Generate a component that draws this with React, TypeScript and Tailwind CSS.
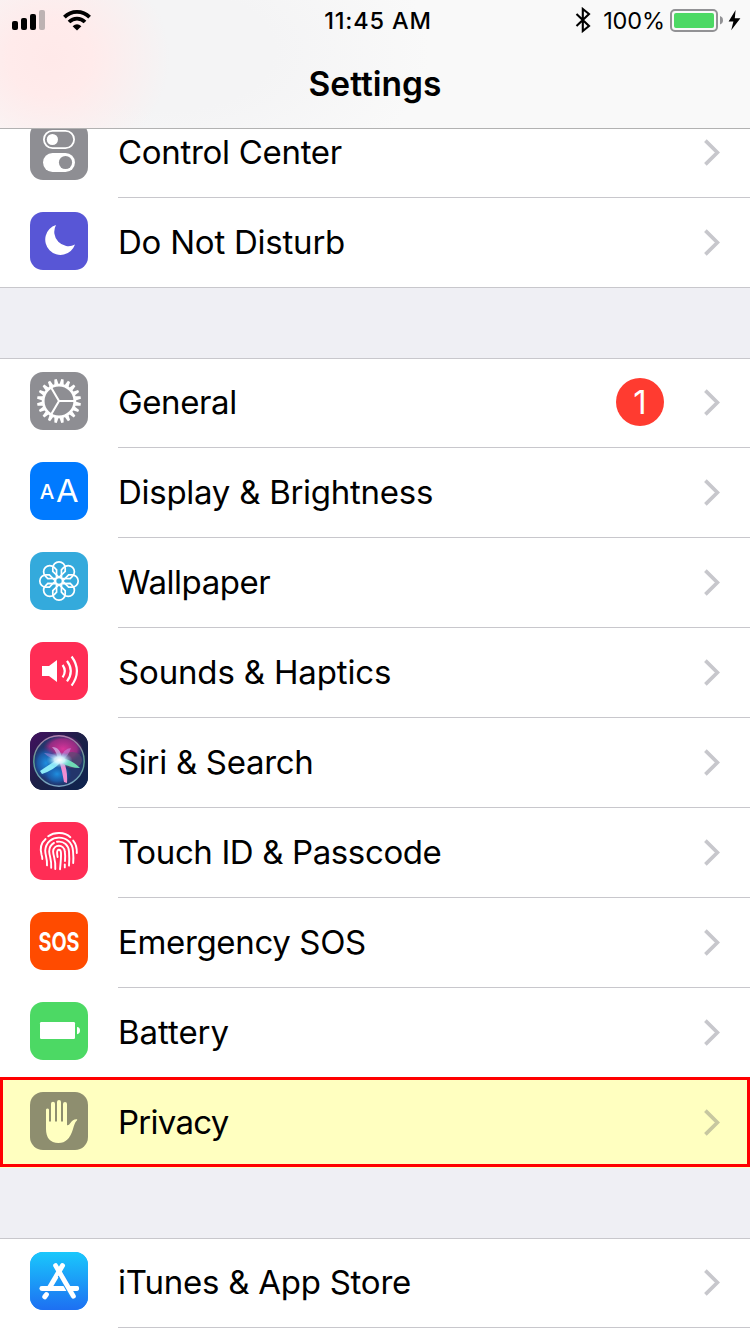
import React from 'react';

const GearIcon = () => {
  const teeth = Array.from({ length: 20 }, (_, i) => i * 18);
  return (
    <g transform="translate(29 29)">
      {teeth.map(angle => (
        <path key={angle} d="M-2.1 -16.5L-1.2 -22H1.2L2.1 -16.5Z" fill="#fff" transform={`rotate(${angle + 9})`} />
      ))}
      <circle r="15.8" fill="none" stroke="#fff" strokeWidth="2.7" />
      <path d="M0 0H15M0 0L-7.6 -13M0 0L-7.6 13" stroke="#fff" strokeWidth="2.1" fill="none" />
    </g>
  );
};

const FlowerIcon = () => (
  <g transform="translate(29 29)" fill="none" stroke="#fff" strokeWidth="1.7">
    {[0, 45, 90, 135, 180, 225, 270, 315].map(angle => (
      <path key={angle} d="M0 -3.6L-6.2 -9.6V-13A6.2 6.2 0 0 1 6.2 -13V-9.6Z" transform={`rotate(${angle})`} />
    ))}
    <circle r="3.6" />
  </g>
);

const SiriIcon = () => (
  <>
    <defs>
      <linearGradient id="siriBg" x1="0" y1="0" x2="1" y2="1">
        <stop offset="0" stopColor="#43105f" />
        <stop offset="0.5" stopColor="#1c2047" />
        <stop offset="1" stopColor="#0d2450" />
      </linearGradient>
      <radialGradient id="siriPink" cx="0.5" cy="0.5" r="0.5">
        <stop offset="0" stopColor="#d8359a" />
        <stop offset="0.7" stopColor="#b02a88" stopOpacity="0.8" />
        <stop offset="1" stopColor="#8a2080" stopOpacity="0" />
      </radialGradient>
      <radialGradient id="siriBlue" cx="0.5" cy="0.5" r="0.5">
        <stop offset="0" stopColor="#1f8fe0" />
        <stop offset="0.6" stopColor="#1a63b5" stopOpacity="0.8" />
        <stop offset="1" stopColor="#183a80" stopOpacity="0" />
      </radialGradient>
      <radialGradient id="siriGlow" cx="0.5" cy="0.5" r="0.5">
        <stop offset="0" stopColor="#fff" />
        <stop offset="0.4" stopColor="#d5f7ff" stopOpacity="0.9" />
        <stop offset="1" stopColor="#5ec8f0" stopOpacity="0" />
      </radialGradient>
      <linearGradient id="siriRing" x1="0" y1="0" x2="0" y2="1">
        <stop offset="0" stopColor="#b07fae" />
        <stop offset="0.5" stopColor="#5aa08f" />
        <stop offset="1" stopColor="#7ba3c4" />
      </linearGradient>
    </defs>
    <rect width="58" height="58" rx="13" fill="url(#siriBg)" />
    <circle cx="29" cy="29" r="25" fill="#23356b" />
    <ellipse cx="33" cy="17" rx="20" ry="14" fill="url(#siriPink)" />
    <ellipse cx="16" cy="31" rx="14" ry="17" fill="url(#siriBlue)" />
    <ellipse cx="27" cy="42" rx="15" ry="12" fill="url(#siriBlue)" />
    <ellipse cx="42" cy="28" rx="10" ry="8" fill="#5b4a72" opacity="0.7" />
    <path d="M30 26Q20 32 10 39L12 42Q24 38 31 30Z" fill="#8decf8" />
    <path d="M29 28Q32 38 34 50L37 51Q38 38 33 28Z" fill="#f08fd2" />
    <path d="M31 26Q41 27 50 36Q40 36 30 30Z" fill="#6fdcb4" />
    <path d="M28 28Q27 20 22 15Q31 15 32 28Z" fill="#d0b4ea" opacity="0.75" />
    <path d="M30 27Q34 16 41 16Q39 23 32 29Z" fill="#c786dd" opacity="0.6" />
    <path d="M29 28Q20 27 14 21Q24 21 31 27Z" fill="#a087d8" opacity="0.6" />
    <ellipse cx="29.5" cy="28" rx="13" ry="8" fill="url(#siriGlow)" />
    <circle cx="29" cy="29" r="25.2" fill="none" stroke="url(#siriRing)" strokeWidth="1.4" />
  </>
);

const icons: { [key: string]: React.ReactNode } = {
  control: (
    <>
      <rect x="13.9" y="8.9" width="30.2" height="17.2" rx="8.6" fill="none" stroke="#fff" strokeWidth="1.8" />
      <circle cx="22.4" cy="17.5" r="5.6" fill="#fff" />
      <rect x="13" y="31" width="32" height="19" rx="9.5" fill="#fff" />
      <circle cx="35.5" cy="40.5" r="6.6" fill="#8e8e93" />
    </>
  ),
  moon: <path d="M26 13A15.3 15.3 0 1 0 45 32.6A14.3 14.3 0 0 1 26 13Z" fill="#fff" />,
  gear: <GearIcon />,
  display: (
    <g fill="#fff" fontFamily="Inter, sans-serif">
      <text x="9.8" y="37" fontSize="20.6" fontWeight="500" textLength="14.6" lengthAdjust="spacingAndGlyphs">A</text>
      <text x="26" y="40" fontSize="31.6" fontWeight="400" textLength="22.6" lengthAdjust="spacingAndGlyphs">A</text>
    </g>
  ),
  flower: <FlowerIcon />,
  sound: (
    <>
      <path d="M12 24H19L27 18V40L19 34H12Z" fill="#fff" />
      <g fill="none" stroke="#fff" strokeWidth="2.2">
        <path d="M32.6 23Q37 29 32.6 35.4" />
        <path d="M37 18.8Q44.6 29 37 39.4" />
        <path d="M41.6 14.5Q52.2 29 41.6 43.6" />
      </g>
    </>
  ),
  siri: <SiriIcon />,
  touch: (
    <g fill="none" stroke="#fff" strokeWidth="1.9" strokeLinecap="round">
      <path d="M18.2 14.2C24.5 9.8 34.5 9.8 40.4 15.2" />
      <path d="M15.6 17C11 21 9.8 27 11.6 33Q12.3 35 12.3 37" />
      <path d="M43.2 18.6C46 22 47 26 46.8 31" />
      <path d="M17 43.4C17.6 37 15.2 34 15.2 28.5C16.5 11 42 11.5 43 29C43.4 33 43.6 37 43.2 41" />
      <path d="M21.2 45.8C21.8 38 19.4 34 19.2 29.5C19.2 25.5 21 22.6 24 20.9" />
      <path d="M27 19.8C34 18.5 38.8 23.5 39 29.5C39.4 35 39.4 39 39 43.6" />
      <path d="M25.3 47C26 38 23.2 34 23.1 29.5C23.6 21.8 34 22 34.8 29.5C35.3 33 35.3 36 35 39" />
      <path d="M34.8 42.5V45.4" />
      <path d="M30 47.2C30.6 41 31.2 36 31 31C30.7 26.6 27 27 27.1 30.6Q27.2 33 27.6 35" />
    </g>
  ),
  sos: (
    <text fill="#fff" fontFamily="Inter, sans-serif" fontSize="26" fontWeight="700" textAnchor="middle" transform="translate(29 38.5) scale(0.76 1)">
      SOS
    </text>
  ),
  battery: (
    <>
      <rect x="10" y="20" width="35" height="17" rx="1.2" fill="#fff" />
      <path d="M47 25Q50 25.2 50 28.6T47 32.2Z" fill="#fff" />
    </>
  ),
  hand: (
    <path
      d="M16 17.5A1.6 1.6 0 0 1 19 17.5V29.5H21V11.7A2 2 0 0 1 25 11.7V29.5H27V10A2 2 0 0 1 31 10V29.5H33V12A2 2 0 0 1 37 12V33Q38.6 33.8 40.2 31.2Q43.2 26.6 47.2 27.2Q47.6 27.8 46 29.6Q44.6 31.2 43 37Q39 51 28.5 51C20 51 16 45.5 16 37Z"
      fill="#ffffc0"
    />
  ),
  store: (
    <>
      <defs>
        <linearGradient id="storeBg" x1="0" y1="0" x2="0" y2="1">
          <stop offset="0" stopColor="#1ac8fc" />
          <stop offset="1" stopColor="#1d6ff2" />
        </linearGradient>
      </defs>
      <rect width="58" height="58" rx="13" fill="url(#storeBg)" />
      <g fill="none" strokeLinecap="round">
        <path d="M11.8 36.5H46.6" stroke="#fff" strokeWidth="4.8" />
        <path d="M32.5 13.6L19.6 35.5" stroke="#fff" strokeWidth="5" />
        <path d="M30.6 22.5L43.2 44.2" stroke="#1f95f7" strokeWidth="6.6" strokeLinecap="butt" />
        <path d="M25.6 13.6L43.4 44.2" stroke="#fff" strokeWidth="4.8" />
        <path d="M40 36.5H46.6" stroke="#fff" strokeWidth="4.8" />
        <path d="M16.4 42.6L14.8 44.8" stroke="#fff" strokeWidth="5" />
      </g>
    </>
  ),
};

type Item = { title: string; icon: string; color: string; tracking: string; badge?: number; highlighted?: boolean };

const focusItems: Item[] = [
  { title: 'Control Center', icon: 'control', color: 'bg-[#8e8e93]', tracking: 'tracking-[-0.3px]' },
  { title: 'Do Not Disturb', icon: 'moon', color: 'bg-[#5856d6]', tracking: 'tracking-[-0.23px]' },
];

const deviceItems: Item[] = [
  { title: 'General', icon: 'gear', color: 'bg-[#8e8e93]', tracking: 'tracking-[-0.4px]', badge: 1 },
  { title: 'Display & Brightness', icon: 'display', color: 'bg-[#007aff]', tracking: 'tracking-[-0.27px]' },
  { title: 'Wallpaper', icon: 'flower', color: 'bg-[#34aadc]', tracking: 'tracking-[-0.45px]' },
  { title: 'Sounds & Haptics', icon: 'sound', color: 'bg-[#ff2d55]', tracking: 'tracking-[-0.16px]' },
  { title: 'Siri & Search', icon: 'siri', color: 'bg-[#1c2047]', tracking: 'tracking-[-0.3px]' },
  { title: 'Touch ID & Passcode', icon: 'touch', color: 'bg-[#ff2d55]', tracking: 'tracking-[-0.38px]' },
  { title: 'Emergency SOS', icon: 'sos', color: 'bg-[#ff4b00]', tracking: 'tracking-[-0.35px]' },
  { title: 'Battery', icon: 'battery', color: 'bg-[#4cd964]', tracking: 'tracking-[-0.05px]' },
  { title: 'Privacy', icon: 'hand', color: 'bg-[#8e8e6f]', tracking: 'tracking-[-0.75px]', highlighted: true },
];

const storeItems: Item[] = [
  { title: 'iTunes & App Store', icon: 'store', color: 'bg-[#1d9bf7]', tracking: 'tracking-[-0.24px]' },
];

const SettingsRow = ({ item, last }: { item: Item; last: boolean }) => (
  <div className={`relative flex h-[90px] pl-[30px] ${item.highlighted ? 'bg-[#ffffc0]' : ''}`}>
    <div className={`mt-3.5 h-[58px] w-[58px] shrink-0 rounded-[13px] ${item.color}`}>
      <svg viewBox="0 0 58 58" className="h-full w-full overflow-visible">{icons[item.icon]}</svg>
    </div>
    <div className={`ml-[30px] flex grow items-center border-b pr-[30px] pb-px ${last ? 'border-transparent' : 'border-[#c8c7cc]'}`}>
      <span className={`grow text-[33px] leading-[40px] whitespace-nowrap ${item.tracking}`}>{item.title}</span>
      {item.badge && (
        <span className="mr-10 flex h-12 w-12 items-center justify-center rounded-full bg-[#ff3b30] pt-0.5 text-[33px] text-white">
          {item.badge}
        </span>
      )}
      <svg viewBox="0 0 16 27" className="mt-px h-[27px] w-4" fill="none" stroke={item.highlighted ? '#c7c7a0' : '#c7c7cc'} strokeWidth="3.7">
        <path d="M1.4 1.6L13.4 13.5L1.4 25.4" />
      </svg>
    </div>
    {item.highlighted && <div className="absolute inset-x-0 -top-px h-[90px] border-[3px] border-[#ff0000]" />}
  </div>
);

const SettingsGroup = ({ items }: { items: Item[] }) => (
  <>
    {items.map((item, i) => (
      <SettingsRow key={item.title} item={item} last={i === items.length - 1 && items.length > 1} />
    ))}
  </>
);

const StatusBar = () => (
  <div className="flex h-10 items-center pr-[9px] pl-3">
    <div className="flex flex-1 items-center">
      <svg viewBox="0 0 80 24" className="h-6 w-20">
        <rect x="0" y="13" width="6" height="9" rx="2" />
        <rect x="9" y="10" width="6" height="12" rx="2" />
        <rect x="18" y="6" width="6" height="16" rx="2" />
        <rect x="27" y="2" width="6" height="20" rx="2" fill="#bdb3b3" />
        <g fill="none" stroke="#000" strokeWidth="3.8">
          <path d="M52.4 9.2C59.4 2.2 70.6 2.2 77.6 9.2" />
          <path d="M57 14C61.6 9.6 68.4 9.6 73 14" />
        </g>
        <path d="M60.6 18.2Q65 14.2 69.4 18.2L65 22.4Z" />
      </svg>
    </div>
    <span className="pt-0.5 pl-[3px] text-[23.5px] font-medium tracking-[0.85px]">11:45 AM</span>
    <div className="flex flex-1 items-center justify-end">
      <svg viewBox="0 0 16 26" className="mr-3 h-[26px] w-4" fill="none" stroke="#000" strokeWidth="2.1">
        <path d="M1.5 7L14 19L7.8 24V2L14 7L1.5 19" />
      </svg>
      <span className="pt-0.5 text-[23.5px] tracking-[-0.1px]">100%</span>
      <div className="ml-[5px] h-[23px] w-12 rounded-[5px] border-2 border-[#929295] p-[2px]">
        <div className="h-full w-full rounded-[2px] bg-[#4cd964]" />
      </div>
      <svg viewBox="0 0 23 24" className="h-6 w-[23px]">
        <path d="M2 8Q5 9 5 12.2T2 16.4Z" fill="#929295" />
        <path d="M17.6 2L10.6 13.6H15.4L13.2 22.2L22.4 10.2H16.8Z" />
      </svg>
    </div>
  </div>
);

export default function App() {
  return (
    <div className="flex h-[1334px] w-[750px] flex-col overflow-hidden bg-[#efeff4] font-['Inter',sans-serif] text-black">
      <header className="h-[129px] shrink-0 border-b border-[#b2b2b2] bg-[#f9f9f9] bg-[radial-gradient(ellipse_120px_110px_at_50px_58px,#ffe9e9_0%,#ffebeb_35%,#ffeaea00_100%),radial-gradient(ellipse_260px_150px_at_170px_50px,#f4f4f5_0%,#f4f4f5_40%,#f4f4f500_100%)]">
        <StatusBar />
        <h1 className="pt-6 text-center text-[33.5px] leading-[40px] font-semibold">Settings</h1>
      </header>

      <main>
        <section className="h-[159px] overflow-hidden border-b border-[#c8c7cc] bg-white">
          <div className="-mt-[21px]">
            <SettingsGroup items={focusItems} />
          </div>
        </section>

        <section className="mt-[70px] h-[810px] border-y border-[#c8c7cc] bg-white">
          <div className="-mt-px">
            <SettingsGroup items={deviceItems} />
          </div>
        </section>

        <section className="mt-[70px] border-t border-[#c8c7cc] bg-white">
          <div className="-mt-px h-24">
            <SettingsGroup items={storeItems} />
          </div>
        </section>
      </main>
    </div>
  );
}
